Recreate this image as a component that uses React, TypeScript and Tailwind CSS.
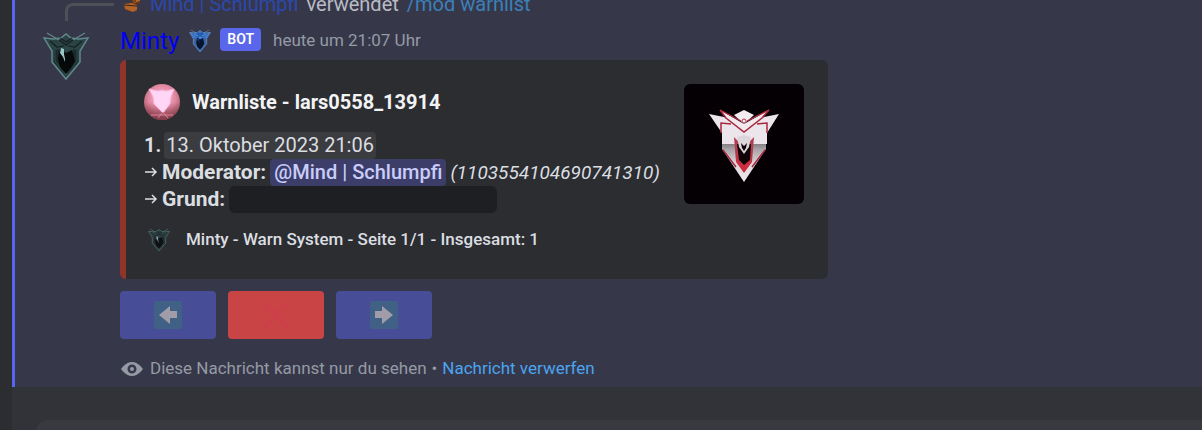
import type { ReactNode } from 'react';

type Palette = {
  edge: string;
  wing: string;
  body: string;
  shade: string;
  core: string;
  spark: string;
};

const teal: Palette = {
  edge: '#5f8989',
  wing: '#2b4446',
  body: '#2b4143',
  shade: '#1b2a2c',
  core: '#05090a',
  spark: '#9cc4c6',
};

const blue: Palette = {
  edge: '#6d8cae',
  wing: '#4585d6',
  body: '#2f6fd0',
  shade: '#3a6098',
  core: '#07142f',
  spark: '#17336b',
};

function Shield({ palette, className }: { palette: Palette; className: string }) {
  return (
    <svg viewBox="0 0 48 50" className={className} aria-hidden="true">
      <path
        d="M2 7 L11 8 L19 7 L24 3 L29 7 L37 8 L46 7 L38 20 L38 31 L24 48 L10 31 L10 20 Z"
        fill={palette.body}
        stroke={palette.edge}
        strokeWidth="1.5"
      />
      <path d="M4 8 L20 13 L24 17 L28 13 L44 8 L37 18 L31 17 L24 21 L17 17 L11 18 Z" fill={palette.wing} />
      <path d="M12 20 L17 18 L18 34 L24 45 L12 31 Z M36 20 L31 18 L30 34 L24 45 L36 31 Z" fill={palette.shade} />
      <path d="M18 18 L24 22 L30 19 L33 30 L29 38 L24 43 L18 37 L16 28 Z" fill={palette.core} />
      <path d="M5 2 L17 9 M43 2 L31 9" stroke={palette.edge} strokeWidth="1.3" />
      <path
        d="M17 9 L24 14 L31 9 M8 10 L15 16 L22 15 M40 10 L33 16 L26 15 M18 7 L24 11 L30 7"
        fill="none"
        stroke={palette.core}
        strokeOpacity="0.6"
        strokeWidth="1.2"
      />
      <path
        d="M13 20 L13 30 L24 44 L35 30 L35 20"
        fill="none"
        stroke={palette.edge}
        strokeOpacity="0.35"
        strokeWidth="1"
      />
      <path d="M19 17 L22 18 L22 23 L23 28 L23 31 L21 26 L18 22 Z" fill={palette.spark} />
    </svg>
  );
}

function PinkOrb() {
  return (
    <svg viewBox="0 0 36 36" className="size-9 shrink-0" role="img" aria-label="lars0558_13914">
      <defs>
        <radialGradient id="orb" cx="50%" cy="40%" r="60%">
          <stop offset="0" stopColor="#ffb9da" />
          <stop offset="0.6" stopColor="#e38aa2" />
          <stop offset="1" stopColor="#a75767" />
        </radialGradient>
        <linearGradient id="orbShade" x1="0" y1="0" x2="0" y2="1">
          <stop offset="0.5" stopColor="#7c3444" stopOpacity="0" />
          <stop offset="1" stopColor="#7c3444" stopOpacity="0.85" />
        </linearGradient>
      </defs>
      <circle cx="18" cy="18" r="18" fill="url(#orb)" />
      <circle cx="18" cy="18" r="18" fill="url(#orbShade)" />
      <path d="M5 5 L14 7 L18 6 L22 7 L30 5 L27 13 L26 20 L19 29 L10 20 L9 13 Z" fill="#ffd6f6" stroke="#fbb0d6" />
      <path d="M7 31 H29 M14 34 L19 28 L24 34" stroke="#d98898" fill="none" />
    </svg>
  );
}

function ServerLogo() {
  return (
    <svg viewBox="0 0 120 120" className="size-30 shrink-0 rounded-md bg-[#050003]" role="img" aria-label="Serverlogo">
      <defs>
        <linearGradient id="plate" x1="0" y1="0" x2="0" y2="1">
          <stop offset="0" stopColor="#858085" />
          <stop offset="0.15" stopColor="#aaa5a9" />
          <stop offset="0.5" stopColor="#dcd5da" />
          <stop offset="1" stopColor="#f0eaee" />
        </linearGradient>
        <linearGradient id="flame" x1="0" y1="0" x2="0" y2="1">
          <stop offset="0" stopColor="#a94452" />
          <stop offset="1" stopColor="#d3283b" />
        </linearGradient>
      </defs>
      <path d="M25 30 L40 33 L60 47 L80 33 L95 30 L83 49 L83 60 H38 V49 Z" fill="#ece5eb" />
      <path d="M50 31 L60 26 L70 31 L60 40 Z" fill="#f3edf2" />
      <path d="M38 60 H82 V65 L60 98 L38 65 Z" fill="url(#plate)" />
      <path d="M36 26 L60 40 L85 26 L78 34 L60 48 L42 34 Z" fill="#f1e9ee" />
      <path d="M36 26 L42 34 L60 48 L78 34 L85 26" fill="none" stroke="#a5283d" strokeWidth="1.500" />
      <path d="M36 26 L57 37 M85 26 L63 37" stroke="#b53248" strokeWidth="1.300" />
      <circle cx="60" cy="37" r="2" fill="#f3edf2" stroke="#b53248" />
      <path d="M37 49 V39 L47 40 M83 49 V39 L73 40" fill="none" stroke="#a5283d" strokeWidth="1.500" />
      <path d="M39 66 L52 83 M81 66 L68 83" fill="none" stroke="#a5283d" strokeWidth="1.500" />
      <path d="M50 53 L55 58 L65 58 L70 53 L68 78 L60 89 L52 78 Z" fill="url(#flame)" />
      <path d="M53 60 L67 60 L66 76 L60 81 L55 76 Z" fill="#100207" />
      <path d="M53 53 L60 51 L67 53 L65 63 L60 70 L55 63 Z" fill="#dcd5da" />
      <path d="M57 59 L60 62 L63 59 L62 64 L60 67 L58 64 Z" fill="#100207" />
    </svg>
  );
}

function MiniFox() {
  return (
    <svg viewBox="0 0 18 18" className="size-[18px] shrink-0" aria-hidden="true">
      <path d="M8 0 H17 V9 H14 V15 L11 17 L5 16 L1 13 V9 L8 8 Z" fill="#5e3518" />
      <path d="M1 9 L9 8 L14 10 L14 15 L10 17 L2 14 Z" fill="#b0622b" />
      <path d="M9 0 H17 V6 L11 8 Z" fill="#b0672b" />
      <path d="M1 10 L14 11 M12 0 V7" stroke="#3c2213" />
      <path d="M13 2 H16 V5" stroke="#e0a354" fill="none" />
    </svg>
  );
}

function EmojiArrow({ flip }: { flip?: boolean }) {
  return (
    <svg viewBox="0 0 28 28" className={flip ? 'size-7 -scale-x-100' : 'size-7'} aria-hidden="true">
      <rect width="28" height="28" rx="2" fill="#416085" />
      <path d="M5 14 L16 5 V10 H23 V17 H16 V23 Z" fill="#a19da8" />
    </svg>
  );
}

function EmojiCross() {
  return (
    <svg viewBox="0 0 28 28" className="size-7" aria-hidden="true">
      <path d="M2 2 Q14 11 25 26 M26 2 Q12 13 3 26" stroke="#ce3e4b" strokeWidth="3" fill="none" />
    </svg>
  );
}

function Eye() {
  return (
    <svg viewBox="0 0 24 24" className="size-6 shrink-0" aria-hidden="true">
      <path
        fill="#949ba4"
        fillRule="evenodd"
        d="M12 5C5.648 5 1 12 1 12s4.648 7 11 7 11-7 11-7-4.648-7-11-7Zm0 11.500a4.500 4.500 0 1 1 0-9 4.500 4.500 0 0 1 0 9Zm0-2.500a2 2 0 1 0 0-4 2 2 0 0 0 0 4Z"
      />
    </svg>
  );
}

function Arrow() {
  return (
    <svg viewBox="0 0 14 14" className="mr-1 inline-block size-[14px] align-baseline" aria-hidden="true">
      <path d="M1 7 H12 M8 3 L12 7 L8 11" fill="none" stroke="#dbdee1" strokeWidth="1.500" />
    </svg>
  );
}

function ActionButton({ label, tone, children }: { label: string; tone: string; children: ReactNode }) {
  return (
    <button
      type="button"
      aria-label={label}
      className={`flex h-12 w-24 items-center justify-center rounded ${tone}`}
    >
      {children}
    </button>
  );
}

function Embed() {
  return (
    <article className="mt-1 flex w-full max-w-[708px] items-start justify-between rounded-md border-l-6 border-[#91352b] bg-[#2c2d31] py-6 pr-6 pl-[18px]">
      <div>
        <div className="flex h-9 items-center gap-3">
          <PinkOrb />
          <h2 className="text-xl font-bold text-[#f2f3f5]">Warnliste - lars0558_13914</h2>
        </div>
        <div className="mt-3 text-xl leading-[27px] whitespace-nowrap text-[#dbdee1]">
          <p className="flex items-center gap-[3px]">
            <b>1.</b>
            <time className="rounded bg-[#3b3c40] px-[2px]">13. Oktober 2023 21:06</time>
          </p>
          <p className="flex items-center gap-1">
            <span>
              <Arrow />
              <b className="text-[21px] leading-none">Moderator:</b>
            </span>
            <span className="rounded bg-[#3c3e69] px-1 font-medium text-[#c9cdfb]">@Mind | Schlumpfi</span>
            <i className="text-[19px]">(1103554104690741310)</i>
          </p>
          <p className="flex items-center gap-1">
            <span>
              <Arrow />
              <b className="text-[21px] leading-none">Grund:</b>
            </span>
            <span className="h-[27px] w-67 rounded-md bg-[#1e1f22]" />
          </p>
        </div>
        <div className="mt-3 flex h-[30px] items-center gap-3">
          <span className="flex size-[30px] items-center justify-center">
            <Shield palette={teal} className="size-6 opacity-75" />
          </span>
          <p className="text-[17px] font-medium text-[#dbdee1]">Minty - Warn System - Seite 1/1 - Insgesamt: 1</p>
        </div>
      </div>
      <ServerLogo />
    </article>
  );
}

export default function App() {
  return (
    <div className="flex h-screen overflow-hidden bg-[#323338] font-[Roboto,'Noto_Sans',sans-serif]">
      <aside className="w-3 shrink-0 bg-[#2b2d31]" />
      <div className="flex min-w-0 grow flex-col">
        <section className="grid shrink-0 grid-cols-[105px_1fr] border-l-3 border-[#5865f2] bg-[#37374a] pb-1">
          <div className="pt-[3px]">
            <div className="ml-[50px] h-[18px] w-[49px] rounded-tl-lg border-t-3 border-l-3 border-[#4e5058]" />
            <Shield palette={teal} className="mt-2 ml-[27px] h-[54px] w-12" />
          </div>
          <div className="min-w-0">
            <div className="-mt-2 flex h-6 items-center text-xl text-[#b9bcc4]">
              <span className="mr-[9px] ml-[3px]">
                <MiniFox />
              </span>
              <a href="#mind" className="text-[#2b49ad]">
                Mind | Schlumpfi
              </a>
              <span className="ml-2">verwendet</span>
              <a href="#command" className="ml-2 text-[#3b80b8]">
                /mod warnlist
              </a>
            </div>
            <header className="mt-[10px] flex h-[30px] items-center">
              <a href="#minty" className="text-2xl text-[#0000f5]">
                Minty
              </a>
              <Shield palette={blue} className="ml-[9px] size-6" />
              <span className="mb-1 ml-2 flex h-[23px] items-center rounded bg-[#5b67ea] px-[7px] text-sm font-semibold text-white">
                BOT
              </span>
              <time className="ml-3 text-[17px] text-[#949ba4]">heute um 21:07 Uhr</time>
            </header>
            <Embed />
            <div className="mt-3 flex gap-3">
              <ActionButton label="Zurück" tone="bg-[#474e97]">
                <EmojiArrow />
              </ActionButton>
              <ActionButton label="Schließen" tone="bg-[#c94444]">
                <EmojiCross />
              </ActionButton>
              <ActionButton label="Weiter" tone="bg-[#474e97]">
                <EmojiArrow flip />
              </ActionButton>
            </div>
            <footer className="mt-4 flex h-7 items-center text-[17px] text-[#949ba4]">
              <Eye />
              <span className="ml-[6px]">Diese Nachricht kannst nur du sehen</span>
              <span className="mx-[5px]">•</span>
              <a href="#dismiss" className="text-[#4aa5f0]">
                Nachricht verwerfen
              </a>
            </footer>
          </div>
        </section>
        <div className="mt-[33px] ml-6 h-16 shrink-0 rounded-tl-xl bg-[#393a3f]" />
      </div>
    </div>
  );
}
